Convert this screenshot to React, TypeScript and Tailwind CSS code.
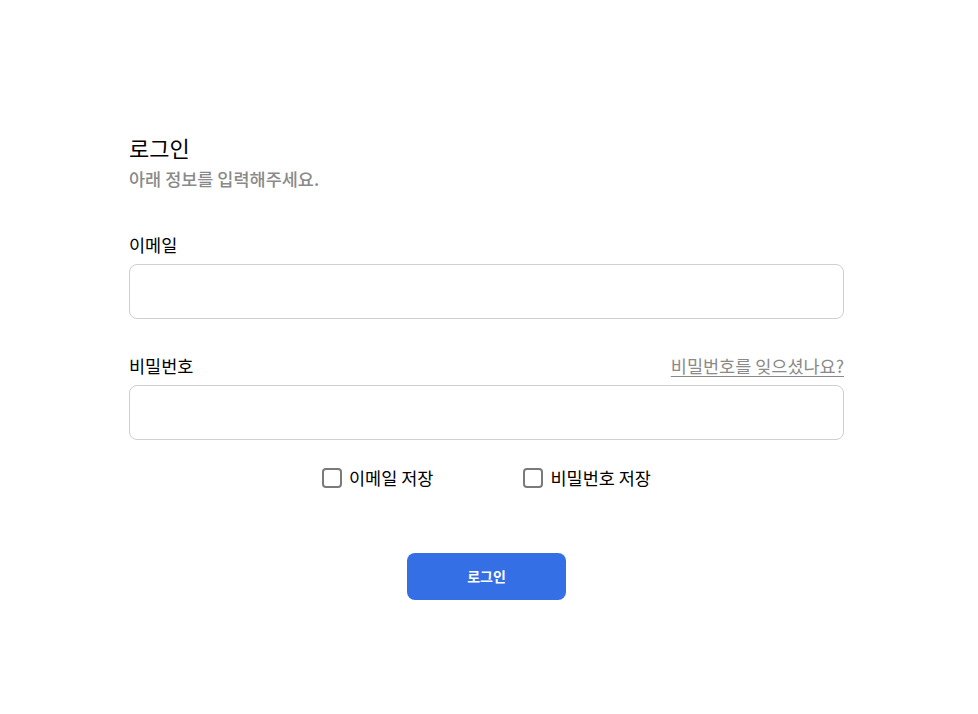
import React, { useState } from 'react';

const font = { fontFamily: '"Noto Sans CJK KR", "Noto Sans", sans-serif' };

export default function App() {
  const [saveEmail, setSaveEmail] = useState(false);
  const [savePw, setSavePw] = useState(false);

  return (
    <div className="min-h-screen bg-white" style={font}>
      <div className="w-[715px] ml-[129px] pt-[131px]">
        {/* Header */}
        <h1 className="text-[22px] leading-[32px] text-black">로그인</h1>
        <p className="mt-[4px] text-[17.5px] leading-[24px] font-medium text-[#8a8a8a]">아래 정보를 입력해주세요.</p>

        {/* Email */}
        <div className="mt-[41px]">
          <label className="block text-[17.5px] leading-[26px] text-black">이메일</label>
          <input
            type="email"
            className="mt-[6px] block w-full h-[55px] rounded-[8px] border border-[#cfcfcf] px-4 outline-none"
          />
        </div>

        {/* Password */}
        <div className="mt-[34px]">
          <div className="flex items-center justify-between">
            <label className="text-[17.5px] leading-[26px] text-black">비밀번호</label>
            <a href="#" className="text-[17.5px] leading-[26px] text-[#8a8a8a] underline underline-offset-[3px]">
              비밀번호를 잊으셨나요?
            </a>
          </div>
          <input
            type="password"
            className="mt-[6px] block w-full h-[55px] rounded-[8px] border border-[#cfcfcf] px-4 outline-none"
          />
        </div>

        {/* Checkboxes */}
        <div className="mt-[25px] flex justify-center gap-[90px]">
          <label className="flex items-center gap-[7px] cursor-pointer" onClick={() => setSaveEmail(!saveEmail)}>
            <span className={`w-[20px] h-[20px] rounded-[4px] border-2 border-[#7a7a7a] ${saveEmail ? 'bg-[#356fe6] border-[#356fe6]' : 'bg-white'}`} />
            <span className="text-[17.5px] leading-[26px] text-black">이메일 저장</span>
          </label>
          <label className="flex items-center gap-[7px] cursor-pointer" onClick={() => setSavePw(!savePw)}>
            <span className={`w-[20px] h-[20px] rounded-[4px] border-2 border-[#7a7a7a] ${savePw ? 'bg-[#356fe6] border-[#356fe6]' : 'bg-white'}`} />
            <span className="text-[17.5px] leading-[26px] text-black">비밀번호 저장</span>
          </label>
        </div>

        {/* Submit */}
        <div className="mt-[62px] flex justify-center">
          <button className="w-[159px] h-[47px] rounded-[8px] bg-[#356fe6] text-white text-[14px] font-semibold">
            로그인
          </button>
        </div>
      </div>
    </div>
  );
}
